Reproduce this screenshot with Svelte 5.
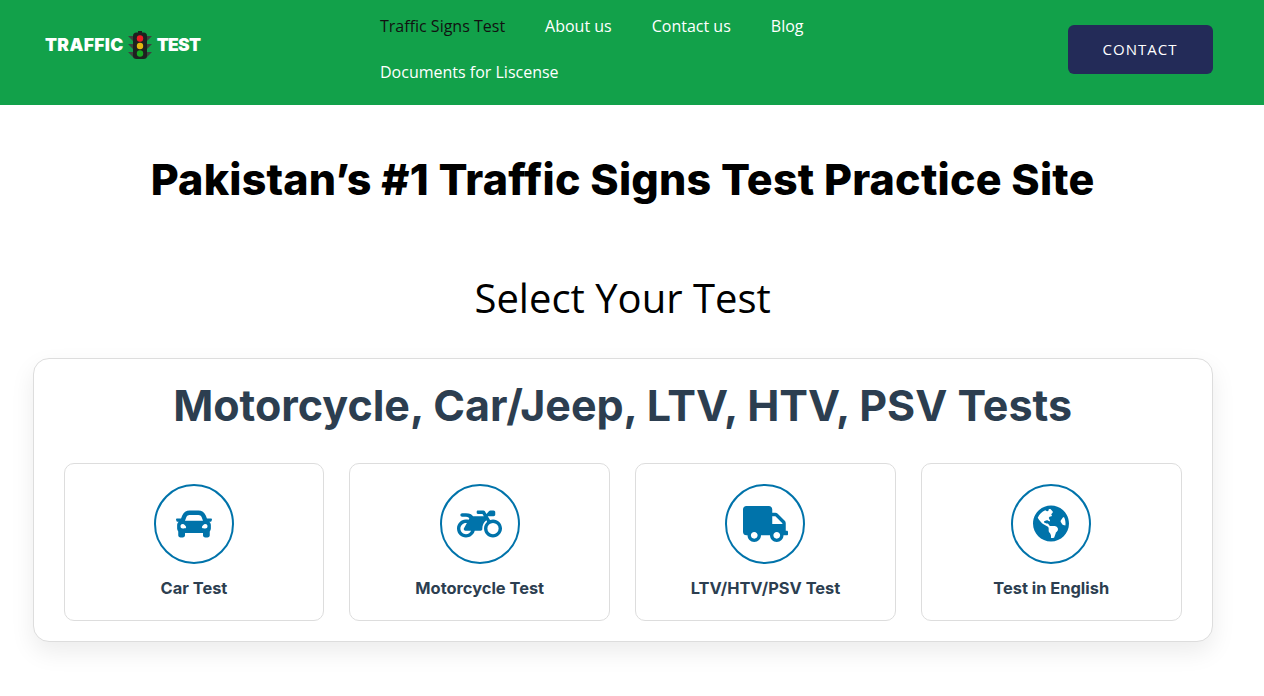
<script>
  const nav = ['Traffic Signs Test', 'About us', 'Contact us', 'Blog', 'Documents for Liscense'];
  const tests = [
    { label: 'Car Test', w: 36, vb: '0 0 512 512', d: 'M499.99 176h-59.87l-16.64-41.6C406.38 91.63 365.57 64 319.5 64h-127c-46.06 0-86.88 27.63-103.99 70.4L71.87 176H12.01C4.2 176-1.53 183.34.37 190.91l6 24C7.7 220.25 12.5 224 18.01 224h20.07C24.65 235.73 16 252.78 16 272v48c0 16.12 6.16 30.67 16 41.93V416c0 17.67 14.33 32 32 32h32c17.67 0 32-14.33 32-32v-32h256v32c0 17.67 14.33 32 32 32h32c17.67 0 32-14.33 32-32v-54.07c9.84-11.25 16-25.8 16-41.93v-48c0-19.22-8.65-36.27-22.07-48H494c5.51 0 10.31-3.75 11.64-9.09l6-24c1.89-7.57-3.84-14.91-11.65-14.91zm-352.06-17.83c7.29-18.22 24.94-30.17 44.57-30.17h127c19.63 0 37.28 11.95 44.57 30.17L384 208H128l19.93-49.83zM96 319.8c-19.2 0-32-12.76-32-31.9S76.8 256 96 256s48 28.71 48 47.85-28.8 15.95-48 15.95zm320 0c-19.2 0-48 3.19-48-15.95S396.8 256 416 256s32 12.76 32 31.9-12.8 31.9-32 31.9z' },
    { label: 'Motorcycle Test', w: 45, vb: '0 0 640 512', d: 'M512.9 192c-14.9-.1-29.1 2.3-42.4 6.9L437.6 144H520c13.3 0 24-10.7 24-24V88c0-13.3-10.7-24-24-24h-45.3c-6.8 0-13.3 2.9-17.8 7.9l-37.5 41.7-22.8-38C392.2 68.4 384.4 64 376 64h-80c-8.8 0-16 7.2-16 16v16c0 8.8 7.2 16 16 16h66.4l19.2 32H227.9c-17.7-23.1-44.9-40-99.9-40H72.5C59 104 47.7 115 48 128.5c.2 13 10.9 23.5 24 23.5h56c24.5 0 38.7 10.9 47.8 24.8l-11.3 20.5c-13-3.9-26.9-5.7-41.3-5.2C55.9 194.5 1.6 249.6 0 317c-1.6 72.1 56.3 131 128 131 59.6 0 109.7-40.8 124-96h84.2c13.7 0 24.6-11.4 24-25.1-2.1-47.1 17.5-93.7 56.2-125l12.5 20.8c-27.6 23.7-45.1 58.9-44.8 98.2.5 69.6 57.2 126.5 126.8 127.1 71.6.7 129.8-57.5 129.2-129.1-.7-69.4-57.5-126.3-127.2-127zM128 400c-44.1 0-80-35.9-80-80s35.9-80 80-80c4.2 0 8.4.3 12.5 1L99 316.4c-8.8 16 2.8 35.6 21 35.6h81.3c-12.4 28.2-40.6 48-73.3 48zM512 240a80 80 0 1 0 0 160a80 80 0 1 0 0-160z' },
    { label: 'LTV/HTV/PSV Test', w: 45, vb: '0 0 640 512', d: 'M624 352h-16V243.9c0-12.7-5.1-24.9-14.1-33.9L494 110.1c-9-9-21.2-14.1-33.9-14.1H416V48c0-26.5-21.5-48-48-48H48C21.5 0 0 21.5 0 48v320c0 26.5 21.5 48 48 48h16c0 53 43 96 96 96s96-43 96-96h128c0 53 43 96 96 96s96-43 96-96h48c8.8 0 16-7.2 16-16v-32c0-8.8-7.2-16-16-16zM160 464c-26.5 0-48-21.5-48-48s21.5-48 48-48 48 21.5 48 48-21.5 48-48 48zm320 0c-26.5 0-48-21.5-48-48s21.5-48 48-48 48 21.5 48 48-21.5 48-48 48zm80-208H416V144h44.1l99.9 99.9V256z' },
    { label: 'Test in English', w: 36, vb: '0 0 496 512', d: 'M248 8C111.03 8 0 119.03 0 256s111.03 248 248 248 248-111.03 248-248S384.97 8 248 8zm82.29 357.6c-3.9 3.88-7.99 7.95-11.31 11.28-2.99 3-5.1 6.7-6.17 10.71-1.51 5.66-2.73 11.38-4.77 16.87l-17.39 46.85c-13.76 3-28 4.69-42.65 4.69v-27.38c1.69-12.62-7.64-36.26-22.63-51.25-6-6-9.37-14.14-9.37-22.63v-32.01c0-11.64-6.27-22.34-16.46-27.97-14.37-7.95-34.81-19.06-48.81-26.11-11.48-5.78-22.1-13.14-31.65-21.75l-.8-.72a114.792 114.792 0 0 1-18.06-20.74c-9.38-13.77-24.66-36.42-34.59-51.14 20.47-45.5 57.36-82.04 103.2-101.89l24.01 12.01C203.48 89.74 216 82.01 216 70.11v-11.3c7.99-1.29 16.12-2.11 24.42-2.41l28.3 28.3c6.25 6.25 6.25 16.38 0 22.63L264 112l-10.34 10.34c-3.12 3.12-3.12 8.19 0 11.31l4.69 4.69c3.12 3.12 3.12 8.19 0 11.31l-8 8a8.008 8.008 0 0 1-5.66 2.34h-8.99c-2.08 0-4.08.81-5.58 2.27l-9.92 9.65a8.008 8.008 0 0 0-1.58 9.31l15.59 31.19c2.66 5.32-1.21 11.58-7.15 11.58h-5.64c-1.93 0-3.79-.7-5.24-1.96l-9.28-8.06a16.017 16.017 0 0 0-15.55-3.1l-31.17 10.39a11.95 11.95 0 0 0-8.17 11.34c0 4.53 2.56 8.66 6.61 10.69l11.08 5.54c9.41 4.71 19.79 7.16 30.31 7.16s22.59 27.29 32 32h66.75c8.49 0 16.62 3.37 22.63 9.37l13.69 13.69a30.503 30.503 0 0 1 8.93 21.57 46.536 46.536 0 0 1-13.72 32.98zM417 274.25c-5.79-1.45-10.84-5-14.15-9.97l-17.98-26.97a23.97 23.97 0 0 1 0-26.62l19.59-29.38c2.32-3.47 5.5-6.28 9.24-8.14l12.98-6.49C440.2 193.59 448 223.87 448 256c0 8.67-.74 17.16-1.82 25.54L417 274.25z' }
  ];
</script>

<header class="header">
  <a class="logo" href="#top">
    <span class="logo-word">TRAFFIC</span>
    <svg class="light" viewBox="0 0 24 28" width="24" height="28" aria-hidden="true">
      <path d="M0 5h6v6zM24 5h-6v6zM0 13h6v6zM24 13h-6v6zM0 21h6v6zM24 21h-6v6z" fill="#3c423e" />
      <rect x="5" y="1.5" width="14" height="26.5" rx="3.5" fill="#1d2220" />
      <rect x="10" y="0" width="4" height="3" fill="#1d2220" />
      <circle cx="12" cy="7.5" r="3.2" fill="#ee1c25" />
      <circle cx="12" cy="15" r="3.2" fill="#e2b80f" />
      <circle cx="12" cy="22.5" r="3.2" fill="#16a822" />
    </svg>
    <span class="logo-word second">TEST</span>
  </a>
  <nav class="nav">
    {#each nav as item, i}
      <a href="#top" class:active={i === 0}>{item}</a>
    {/each}
  </nav>
  <a class="contact" href="#top">CONTACT</a>
</header>

<main class="main">
  <h1 class="headline">Pakistan’s #1 Traffic Signs Test Practice Site</h1>
  <h2 class="select">Select Your Test</h2>
  <section class="panel">
    <h3 class="panel-title">Motorcycle, Car/Jeep, LTV, HTV, PSV Tests</h3>
    <div class="grid">
      {#each tests as t}
        <a class="card" href="#top">
          <span class="circle">
            <svg viewBox={t.vb} width={t.w} fill="#0073aa" fill-rule="evenodd" aria-hidden="true"><path d={t.d} /></svg>
          </span>
          <span class="label">{t.label}</span>
        </a>
      {/each}
    </div>
  </section>
</main>

<style>
  :global(body) {
    background: #fff;
    font-family: "Open Sans", sans-serif;
  }
  a {
    text-decoration: none;
  }
  .header {
    height: 105px;
    background: #12a14a;
    display: flex;
    align-items: flex-start;
    box-sizing: border-box;
  }
  .logo {
    width: 335px;
    margin-left: 45px;
    margin-top: 31px;
    display: flex;
    align-items: center;
    gap: 4px;
    height: 28px;
    flex: none;
  }
  .logo-word {
    font-family: Inter, sans-serif;
    font-weight: 900;
    font-size: 17.5px;
    letter-spacing: 0.35px;
    color: #fff;
    padding-bottom: 1px;
  }
  .second {
    margin-left: 1px;
    letter-spacing: -0.7px;
  }
  .light {
    flex: none;
  }
  .nav {
    width: 460px;
    flex: none;
    display: flex;
    flex-wrap: wrap;
    column-gap: 40px;
  }
  .nav a {
    color: #fff;
    font-size: 16px;
    line-height: 46px;
    height: 46px;
    margin-top: 3px;
  }
  .nav a:nth-child(n + 5) {
    margin-top: 0;
  }
  .nav a.active {
    color: #111;
  }
  .contact {
    margin-left: 228px;
    margin-top: 25px;
    width: 145px;
    height: 49px;
    box-sizing: border-box;
    padding: 0 1px 2px 0;
    flex: none;
    border-radius: 6px;
    background: #232b58;
    color: #fff;
    font-size: 15px;
    letter-spacing: 1px;
    display: flex;
    align-items: center;
    justify-content: center;
  }
  .main {
    width: 1180px;
    margin-left: 32.6px;
    padding-bottom: 40px;
  }
  .headline {
    margin: 0;
    padding-top: 48px;
    text-align: center;
    font-family: Inter, sans-serif;
    font-weight: 800;
    font-size: 43px;
    line-height: 52px;
    color: #000;
    letter-spacing: 0.2px;
  }
  .select {
    margin: 0;
    padding-top: 68px;
    text-align: center;
    font-weight: 400;
    font-size: 40px;
    line-height: 50px;
    color: #000;
  }
  .panel {
    margin-top: 35px;
    height: 284px;
    box-sizing: border-box;
    border: 1px solid #ddd;
    border-radius: 16px;
    background: #fff;
    box-shadow: 0 10px 25px rgba(0, 0, 0, 0.08);
    padding: 16px 30px 20px;
  }
  .panel-title {
    margin: 0;
    text-align: center;
    font-family: Inter, sans-serif;
    font-weight: 700;
    font-size: 43px;
    line-height: 60px;
    color: #2c3e50;
  }
  .grid {
    margin-top: 28px;
    display: grid;
    grid-template-columns: repeat(4, 1fr);
    column-gap: 25px;
  }
  .card {
    height: 158px;
    box-sizing: border-box;
    border: 1px solid #ddd;
    border-radius: 10px;
    background: #fff;
    display: flex;
    flex-direction: column;
    align-items: center;
    padding-top: 20px;
  }
  .circle {
    width: 80px;
    height: 80px;
    box-sizing: border-box;
    border: 2px solid #0073aa;
    border-radius: 50%;
    display: flex;
    align-items: center;
    justify-content: center;
  }
  .label {
    margin-top: 14px;
    font-family: Inter, sans-serif;
    font-weight: 700;
    font-size: 16.4px;
    line-height: 20px;
    color: #2c3e50;
  }
</style>
